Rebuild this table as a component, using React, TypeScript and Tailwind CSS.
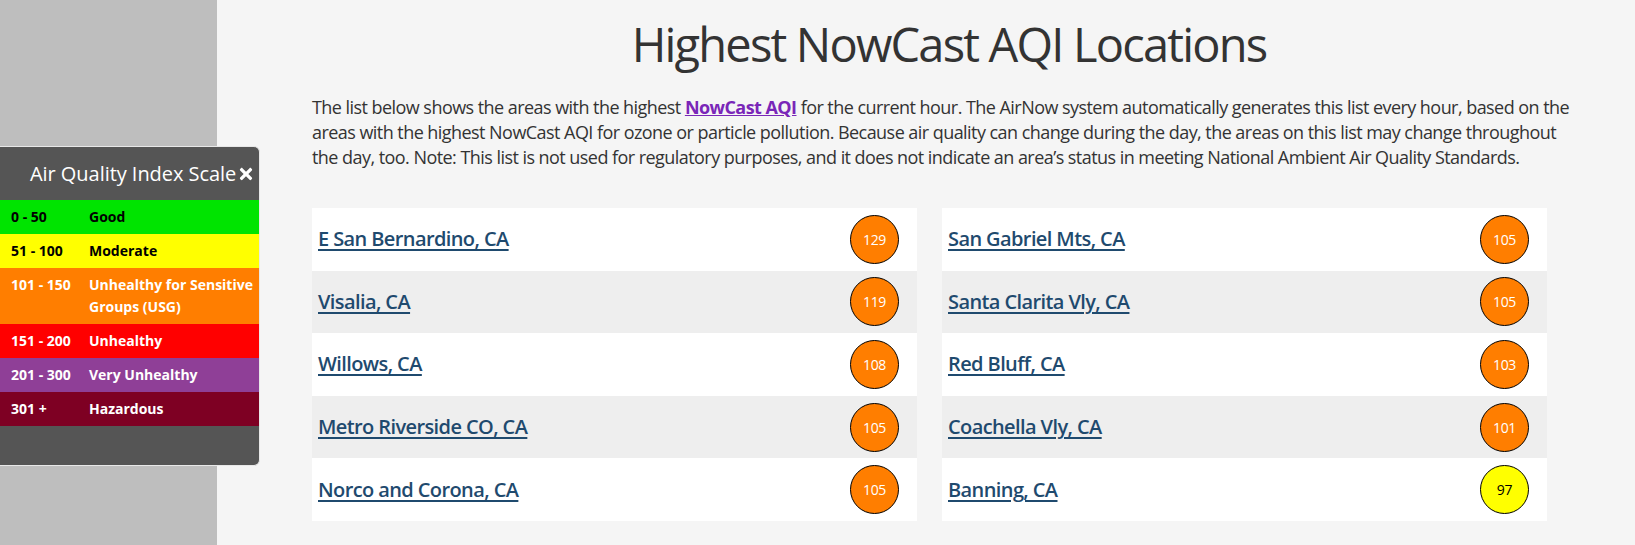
import React from 'react';
import { FaTimes } from 'react-icons/fa';

type Site = { name: string; aqi: number };

const leftSites: Site[] = [
  { name: 'E San Bernardino, CA', aqi: 129 },
  { name: 'Visalia, CA', aqi: 119 },
  { name: 'Willows, CA', aqi: 108 },
  { name: 'Metro Riverside CO, CA', aqi: 105 },
  { name: 'Norco and Corona, CA', aqi: 105 },
];

const rightSites: Site[] = [
  { name: 'San Gabriel Mts, CA', aqi: 105 },
  { name: 'Santa Clarita Vly, CA', aqi: 105 },
  { name: 'Red Bluff, CA', aqi: 103 },
  { name: 'Coachella Vly, CA', aqi: 101 },
  { name: 'Banning, CA', aqi: 97 },
];

const scale = [
  { range: '0 - 50', label: 'Good', cls: 'bg-[#00e400] text-black' },
  { range: '51 - 100', label: 'Moderate', cls: 'bg-[#ffff00] text-black' },
  { range: '101 - 150', label: 'Unhealthy for Sensitive Groups (USG)', cls: 'bg-[#ff7e00] text-white' },
  { range: '151 - 200', label: 'Unhealthy', cls: 'bg-[#ff0000] text-white' },
  { range: '201 - 300', label: 'Very Unhealthy', cls: 'bg-[#8f3f97] text-white' },
  { range: '301 +', label: 'Hazardous', cls: 'bg-[#7e0023] text-white' },
];

const SiteList: React.FC<{ sites: Site[] }> = ({ sites }) => (
  <div className="flex flex-col">
    {sites.map((site, i) => (
      <div
        key={site.name}
        className={`flex h-[62.6px] items-center justify-between pl-[6px] pr-[18px] ${i % 2 === 1 ? 'bg-[#eeeeee]' : 'bg-white'}`}
      >
        <a href="#" className="text-[20px] font-semibold tracking-[-0.6px] text-[#1f4a6e] underline underline-offset-[3px]">
          {site.name}
        </a>
        <div
          className={`flex h-[49px] w-[49px] items-center justify-center rounded-full border border-black text-[14px] tracking-[-0.3px] ${site.aqi > 100 ? 'bg-[#ff7e00] text-white' : 'bg-[#ffff00] text-black'}`}
        >
          {site.aqi}
        </div>
      </div>
    ))}
  </div>
);

const App: React.FC = () => {
  return (
    <div className="relative flex h-[545px] w-full overflow-hidden font-['Open_Sans',sans-serif]">
      <div className="h-full w-[217px] shrink-0 bg-[#bebebe]" />

      <div className="flex-1 bg-[#f5f5f5] pl-[95px] pr-[49px] pt-[18px] text-[#333333]">
        <h1 className="text-center text-[47px] leading-[53px] tracking-[-1.8px]">Highest NowCast AQI Locations</h1>
        <p className="mt-[24px] text-[18px] leading-[25px] tracking-[-0.55px]">
          The list below shows the areas with the highest{' '}
          <a href="#" className="font-bold text-[#7a26b8] underline">NowCast AQI</a> for the current hour. The AirNow
          system automatically generates this list every hour, based on the areas with the highest NowCast AQI for
          ozone or particle pollution. Because air quality can change during the day, the areas on this list may change
          throughout the day, too. Note: This list is not used for regulatory purposes, and it does not indicate an
          area’s status in meeting National Ambient Air Quality Standards.
        </p>
        <div className="mt-[38px] grid w-[1235px] grid-cols-2 gap-x-[25px]">
          <SiteList sites={leftSites} />
          <SiteList sites={rightSites} />
        </div>
      </div>

      {/* AQI scale legend, overlays the sidebar */}
      <div className="absolute left-0 top-[146px] w-[260px] overflow-hidden rounded-r-[6px] border border-l-0 border-[#e8e8e8] bg-[#555555]">
        <div className="flex h-[53px] items-center pl-[30px] text-[20px] tracking-[-0.05px] text-white">
          <span>Air Quality Index Scale</span>
          <FaTimes className="ml-[1px] h-[18px] w-[18px]" />
        </div>
        {scale.map(row => (
          <div key={row.range} className={`flex py-[6px] text-[14px] font-bold leading-[22px] ${row.cls}`}>
            <div className="w-[89px] shrink-0 pl-[11px]">{row.range}</div>
            <div className="pr-[2px]">{row.label}</div>
          </div>
        ))}
        <div className="h-[39px]" />
      </div>
    </div>
  );
};

export default App;
